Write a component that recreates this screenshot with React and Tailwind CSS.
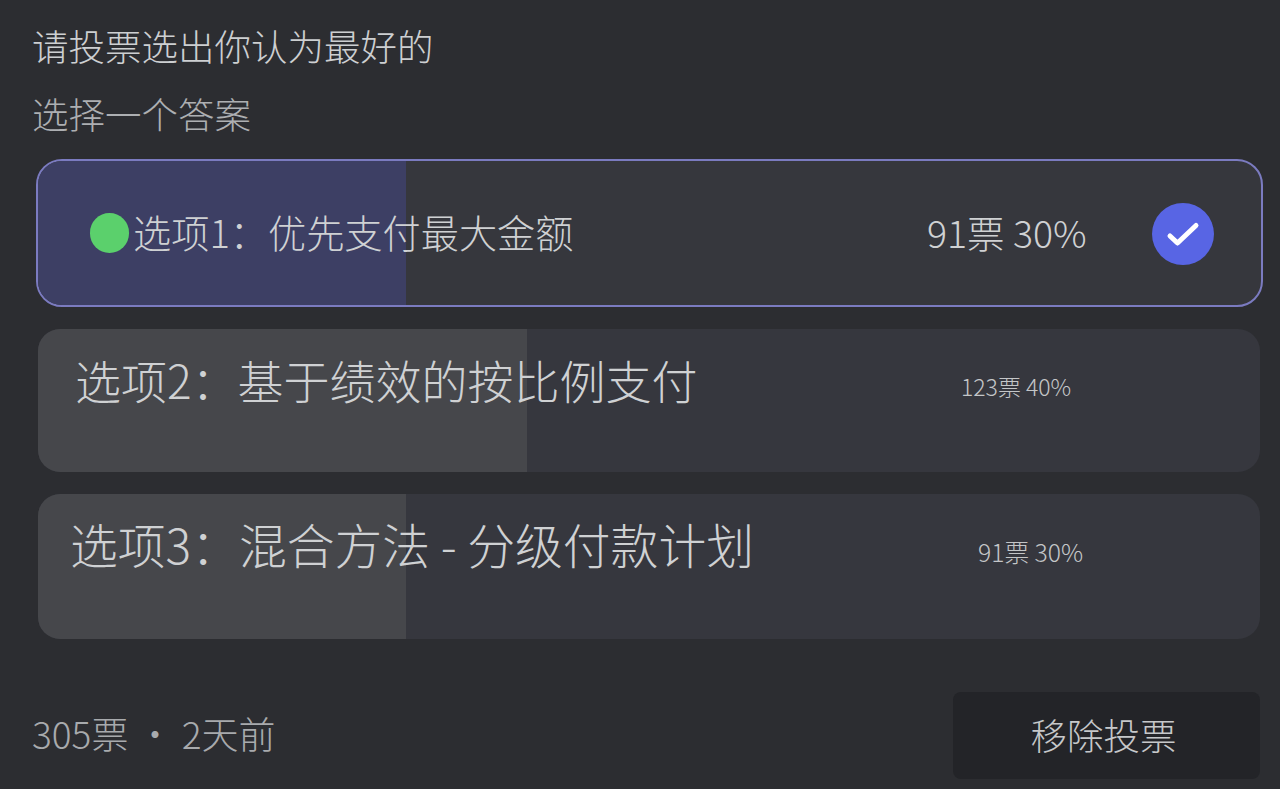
import React from "react";

function Check() {
  return (
    <div className="w-[62px] h-[62px] rounded-full bg-[#5865e4] flex items-center justify-center">
      <svg width="36" height="36" viewBox="0 0 36 36" fill="none">
        <path d="M5 20 L12.5 27 L31 9.5" stroke="white" strokeWidth="5" strokeLinecap="round" strokeLinejoin="round" />
      </svg>
    </div>
  );
}

export default function App() {
  return (
    <div className="w-[1280px] h-[789px] overflow-hidden bg-[#2c2d31] text-[#cfd1d3] flex flex-col font-['Noto_Sans_CJK_SC','Noto_Sans',sans-serif] font-light">
      <div className="pl-[32px] pt-[21px] text-[36.5px] leading-[50px] text-[#cdcfd1]">请投票选出你认为最好的</div>
      <div className="pl-[32px] pt-[18px] text-[36.5px] leading-[50px] text-[#adafb2]">选择一个答案</div>

      <div className="mt-[20px] ml-[36px] w-[1227px] h-[148px] relative rounded-[26px] border-2 border-[#7b7bc0] bg-[#36373d] overflow-hidden flex items-center">
        <div className="absolute left-0 top-0 bottom-0 w-[368px] bg-[#3d3f64]" />
        <div className="relative flex items-center w-full">
          <div className="ml-[52px] w-[39px] h-[40px] rounded-full bg-[#5bd06c]" />
          <div className="ml-[4px] -mt-[3px] text-[38.2px] leading-[50px] w-[794px] whitespace-nowrap">选项1：优先支付最大金额</div>
          <div className="-mt-[3px] text-[37.5px] leading-[50px] whitespace-nowrap w-[225px]">91票 30%</div>
          <div className="mt-[1px]"><Check /></div>
        </div>
      </div>

      <div className="mt-[22px] ml-[38px] w-[1222px] h-[143px] relative rounded-[22px] bg-[#36373e] overflow-hidden">
        <div className="absolute left-0 top-0 bottom-0 w-[489px] bg-[#46474b]" />
        <div className="relative flex w-full">
          <div className="ml-[37px] mt-[19px] text-[46px] leading-[62px] whitespace-nowrap w-[886px]">选项2：基于绩效的按比例支付</div>
          <div className="mt-[40px] text-[23px] leading-[34px] text-[#c4c6c8] whitespace-nowrap">123票 40%</div>
        </div>
      </div>

      <div className="mt-[22px] ml-[38px] w-[1222px] h-[145px] relative rounded-[22px] bg-[#36373e] overflow-hidden">
        <div className="absolute left-0 top-0 bottom-0 w-[368px] bg-[#46474b]" />
        <div className="relative flex w-full">
          <div className="ml-[32px] mt-[19px] text-[47.8px] leading-[62px] whitespace-nowrap w-[908px]">选项3：混合方法 - 分级付款计划</div>
          <div className="mt-[40px] text-[24.7px] leading-[34px] text-[#c4c6c8] whitespace-nowrap">91票 30%</div>
        </div>
      </div>

      <div className="mt-[53px] pl-[32px] pr-[20px] flex items-center justify-between">
        <div className="-mt-[6px] text-[37px] leading-[50px] text-[#a8aaad] whitespace-pre">305票 ・ 2天前</div>
        <div className="w-[307px] h-[87px] rounded-[8px] bg-[#232428] flex items-center justify-center text-[36.5px] text-[#c6c8ca]"><span className="-ml-[6px]">移除投票</span></div>
      </div>
    </div>
  );
}
